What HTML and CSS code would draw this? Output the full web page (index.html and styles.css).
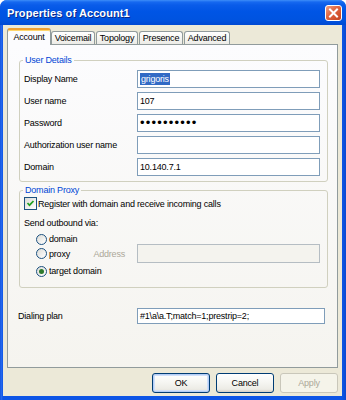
FILE: index.html
```html
<!DOCTYPE html>
<html>
<head>
<meta charset="utf-8">
<link rel="stylesheet" href="styles.css">
</head>
<body>
<div class="window">
  <div class="titlebar">
    <span class="title">Properties of Account1</span>
    <span class="close">
      <svg width="17" height="16" viewBox="0 0 17 16">
        <defs>
          <linearGradient id="cg" x1="0" y1="0" x2="1" y2="1">
            <stop offset="0" stop-color="#f0a58a"/>
            <stop offset="0.45" stop-color="#e0643f"/>
            <stop offset="1" stop-color="#c2401c"/>
          </linearGradient>
        </defs>
        <rect x="0.5" y="0.5" width="16" height="15" rx="2.5" fill="url(#cg)" stroke="#ffffff"/>
        <path d="M5 4.5 L12 11.5 M12 4.5 L5 11.5" stroke="#ffffff" stroke-width="2" stroke-linecap="square"/>
      </svg>
    </span>
  </div>
  <div class="client">
    <div class="tabs">
      <div class="tab active t-account">Account</div>
      <div class="tab t-voicemail">Voicemail</div>
      <div class="tab t-topology">Topology</div>
      <div class="tab t-presence">Presence</div>
      <div class="tab t-advanced">Advanced</div>
    </div>
    <div class="panel">
      <fieldset class="group user">
        <legend>User Details</legend>
        <div class="row"><span class="label">Display Name</span><div class="input"><span class="sel">grigoris</span></div></div>
        <div class="row"><span class="label">User name</span><div class="input">107</div></div>
        <div class="row"><span class="label">Password</span><div class="input dots">••••••••••</div></div>
        <div class="row"><span class="label">Authorization user name</span><div class="input"></div></div>
        <div class="row"><span class="label">Domain</span><div class="input">10.140.7.1</div></div>
      </fieldset>
      <fieldset class="group proxy">
        <legend>Domain Proxy</legend>
        <div class="check-row">
          <span class="checkbox">
            <svg width="11" height="11" viewBox="0 0 11 11"><path d="M2.5 5 L4.5 7.2 L8.5 3" fill="none" stroke="#21a121" stroke-width="1.7"/></svg>
          </span>
          <span>Register with domain and receive incoming calls</span>
        </div>
        <div class="send">Send outbound via:</div>
        <div class="radio-row first"><span class="radio"></span>domain</div>
        <div class="radio-row proxy-row">
          <span class="lead"><span class="radio"></span>proxy<span class="addr">Address</span></span>
          <div class="input disabled"></div>
        </div>
        <div class="radio-row last"><span class="radio checked"></span>target domain</div>
      </fieldset>
      <div class="row dial"><span class="label">Dialing plan</span><div class="input">#1\a\a.T;match=1;prestrip=2;</div></div>
    </div>
    <div class="buttons">
      <div class="btn default">OK</div>
      <div class="btn">Cancel</div>
      <div class="btn disabled">Apply</div>
    </div>
  </div>
</div>
</body>
</html>
```

FILE: styles.css
```css
html, body {
  margin: 0;
  padding: 0;
  background: #ffffff;
}

body {
  font-family: "Liberation Sans", Arial, sans-serif;
  font-size: 9px;
  letter-spacing: -0.2px;
  color: #000000;
}

.window {
  width: 346px;
  height: 400px;
  box-sizing: border-box;
  display: flex;
  flex-direction: column;
  background: linear-gradient(to right, #0a4bd6 0, #2a6cf0 1px, #0d55e6 3px, #0d55e6 342px, #0a48d0 100%);
  border-radius: 7px 7px 0 0;
}

.titlebar {
  height: 25px;
  flex: none;
  display: flex;
  align-items: center;
  justify-content: space-between;
  padding: 0 4px 0 7px;
  box-sizing: border-box;
  border-radius: 7px 7px 0 0;
  background: linear-gradient(to bottom, #3d8ef8 0, #1669f0 2px, #0a5ce9 5px, #0055e5 45%, #0053e0 80%, #0049d2 100%);
}

.title {
  color: #ffffff;
  font-weight: bold;
  font-size: 11px;
  letter-spacing: 0.1px;
  text-shadow: 1px 1px 0 #0a2a8a;
}

.close {
  display: flex;
}

.client {
  flex: 1;
  margin: 0 4px 4px 3px;
  background: #ece9d8;
  display: flex;
  flex-direction: column;
}

.tabs {
  height: 19px;
  display: flex;
  align-items: flex-end;
  padding-left: 4px;
  flex: none;
}

.tab {
  height: 13px;
  box-sizing: border-box;
  border: 1px solid #919b9c;
  border-bottom: none;
  border-radius: 3px 3px 0 0;
  background: linear-gradient(to bottom, #ffffff, #f4f4f0 60%, #ecebe6);
  line-height: 12px;
  text-align: center;
  margin-right: 1px;
}

.tab.active {
  height: 17px;
  margin-bottom: -1px;
  margin-right: 0;
  position: relative;
  z-index: 1;
  border-top: 2px solid #f0a030;
  box-shadow: inset 0 1px 0 #ffd66a;
  background: #fcfcfe;
  line-height: 12px;
  padding-top: 1px;
  padding-bottom: 2px;
  border-radius: 3px 3px 0 0;
}

.t-account { width: 44px; }
.t-voicemail { width: 44px; }
.t-topology { width: 42px; }
.t-presence { width: 44px; }
.t-advanced { width: 46px; }

.panel {
  margin-left: 4px;
  width: 331px;
  height: 324px;
  box-sizing: border-box;
  border: 1px solid #919b9c;
  background: linear-gradient(to bottom, #fcfcfe, #f5f4ef);
  padding-top: 10px;
  flex: none;
}

.group {
  margin: 0 9px 0 11px;
  padding: 4px 6px 5px 4px;
  border: 1px solid #d0d0bf;
  border-radius: 3px;
  min-width: 0;
}

.group legend {
  padding: 0 2px;
  margin-left: -1px;
  color: #0046d5;
  line-height: 11px;
}

.row {
  display: flex;
  align-items: center;
  height: 18px;
}

.row + .row {
  margin-top: 4px;
}

.label {
  width: 113px;
  flex: none;
}

.input {
  width: 183px;
  height: 18px;
  box-sizing: border-box;
  border: 1px solid #7f9db9;
  background: #ffffff;
  padding-left: 2px;
  line-height: 16px;
  white-space: nowrap;
  overflow: hidden;
  flex: none;
}

.sel {
  background: #316ac5;
  color: #ffffff;
  padding: 1px 1px;
}

.dots {
  font-size: 13px;
  letter-spacing: 1.2px;
  line-height: 15px;
}

.proxy {
  margin-top: 3px;
  padding: 1px 6px 10px 4px;
}

.check-row {
  display: flex;
  align-items: center;
  height: 13px;
}

.checkbox {
  width: 13px;
  height: 13px;
  box-sizing: border-box;
  border: 1px solid #1c5180;
  background: linear-gradient(135deg, #dcdcd7, #ffffff);
  margin-right: 1px;
  display: flex;
  flex: none;
}

.send {
  margin-top: 7px;
  line-height: 12px;
}

.radio-row {
  display: flex;
  align-items: center;
  height: 12px;
  padding-left: 12px;
}

.radio-row.first {
  margin-top: 4px;
}

.radio-row.proxy-row {
  height: 19px;
  margin-top: -1px;
  padding-left: 0;
}

.radio-row.last {
  margin-top: 2px;
}

.lead {
  width: 113px;
  box-sizing: border-box;
  padding-left: 12px;
  display: flex;
  align-items: center;
  flex: none;
}

.addr {
  margin-left: auto;
  margin-right: 12px;
  color: #aca899;
}

.radio {
  width: 11px;
  height: 11px;
  box-sizing: border-box;
  border: 1px solid #1c5180;
  border-radius: 50%;
  background: linear-gradient(135deg, #dcdcd7, #ffffff);
  margin-right: 2px;
  flex: none;
  display: flex;
  align-items: center;
  justify-content: center;
}

.radio.checked::after {
  content: "";
  width: 5px;
  height: 5px;
  border-radius: 50%;
  background: #2d7a2d;
}

.input.disabled {
  height: 19px;
  background: #f4f3ee;
  border-color: #b5bdc3;
}

.dial {
  margin: 20px 0 0 10px;
  height: 16px;
}

.dial .label {
  width: 119px;
}

.dial .input {
  width: 188px;
  height: 16px;
  line-height: 14px;
}

.buttons {
  display: flex;
  justify-content: flex-end;
  gap: 6px;
  margin-top: 5px;
  padding-right: 4px;
}

.btn {
  width: 58px;
  height: 20px;
  box-sizing: border-box;
  border: 1px solid #003c74;
  border-radius: 3px;
  background: linear-gradient(to bottom, #ffffff, #f5f5f1 50%, #ecebe5 85%, #d6d0c5);
  text-align: center;
  line-height: 18px;
}

.btn.default {
  box-shadow: inset 0 0 0 1px #b4cdf5, inset 0 0 0 2px #d0e0fa;
}

.btn.disabled {
  border-color: #c9c7ba;
  background: #f5f4ea;
  color: #aca899;
}
```
